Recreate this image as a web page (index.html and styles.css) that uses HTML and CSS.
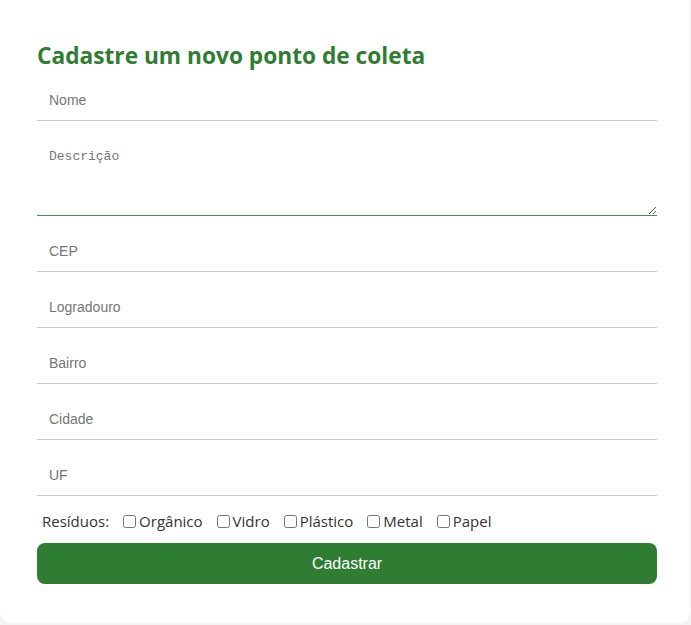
FILE: index.html
```html
<!DOCTYPE html>
<html lang="pt-BR">
<head>
<meta charset="utf-8">
<title>Cadastro de ponto de coleta</title>
<link rel="stylesheet" href="styles.css">
</head>
<body>
<div class="card">
  <h2 class="title">Cadastre um novo ponto de coleta</h2>
  <form class="form">
    <input class="field" type="text" placeholder="Nome">
    <textarea class="field area" placeholder="Descrição"></textarea>
    <input class="field" type="text" placeholder="CEP">
    <input class="field" type="text" placeholder="Logradouro">
    <input class="field" type="text" placeholder="Bairro">
    <input class="field" type="text" placeholder="Cidade">
    <input class="field" type="text" placeholder="UF">
    <div class="residuos">
      <span class="res-label">Resíduos:</span>
      <label class="opt"><input type="checkbox" class="cb">Orgânico</label>
      <label class="opt"><input type="checkbox" class="cb">Vidro</label>
      <label class="opt"><input type="checkbox" class="cb">Plástico</label>
      <label class="opt"><input type="checkbox" class="cb">Metal</label>
      <label class="opt"><input type="checkbox" class="cb">Papel</label>
    </div>
    <button type="button" class="btn">Cadastrar</button>
  </form>
</div>
</body>
</html>
```
FILE: styles.css
```css
html, body {
  margin: 0;
  padding: 0;
}
body {
  background: #f4f4f4;
  height: 625px;
}
.card {
  width: 690px;
  box-sizing: border-box;
  background: #ffffff;
  border-radius: 0 0 12px 12px;
  padding: 39px 33px 39px 37px;
}
.title {
  margin: 0 0 8px 0;
  font-family: "Open Sans", sans-serif;
  font-weight: 700;
  font-size: 22.7px;
  line-height: 34px;
  color: #2e7d32;
}
.form {
  display: flex;
  flex-direction: column;
  gap: 16px;
}
.field {
  display: block;
  width: 100%;
  box-sizing: border-box;
  height: 40px;
  border: none;
  border-bottom: 1px solid #cccccc;
  padding: 0 12px 1px;
  font-family: "Liberation Sans", Arial, sans-serif;
  font-size: 14px;
  background: #ffffff;
  outline: none;
}
.field::placeholder {
  color: #757575;
}
.area {
  height: 79px;
  padding: 12px;
  font-family: "Liberation Mono", monospace;
  font-size: 13px;
  border-bottom: 1px solid #3a9a4a;
  resize: vertical;
}
.residuos {
  display: flex;
  align-items: center;
  gap: 14px;
  margin-top: -1px;
  padding-left: 5px;
  font-family: "Open Sans", sans-serif;
  font-size: 15px;
  color: #333333;
  height: 20px;
}
.opt {
  display: flex;
  align-items: center;
}
.cb {
  width: 13px;
  height: 13px;
  margin: 0 3px 0 0;
}
.btn {
  margin-top: -4px;
  height: 41px;
  border: none;
  border-radius: 8px;
  background: #2e7d32;
  color: #ffffff;
  font-family: "Liberation Sans", Arial, sans-serif;
  font-size: 16px;
}
```
